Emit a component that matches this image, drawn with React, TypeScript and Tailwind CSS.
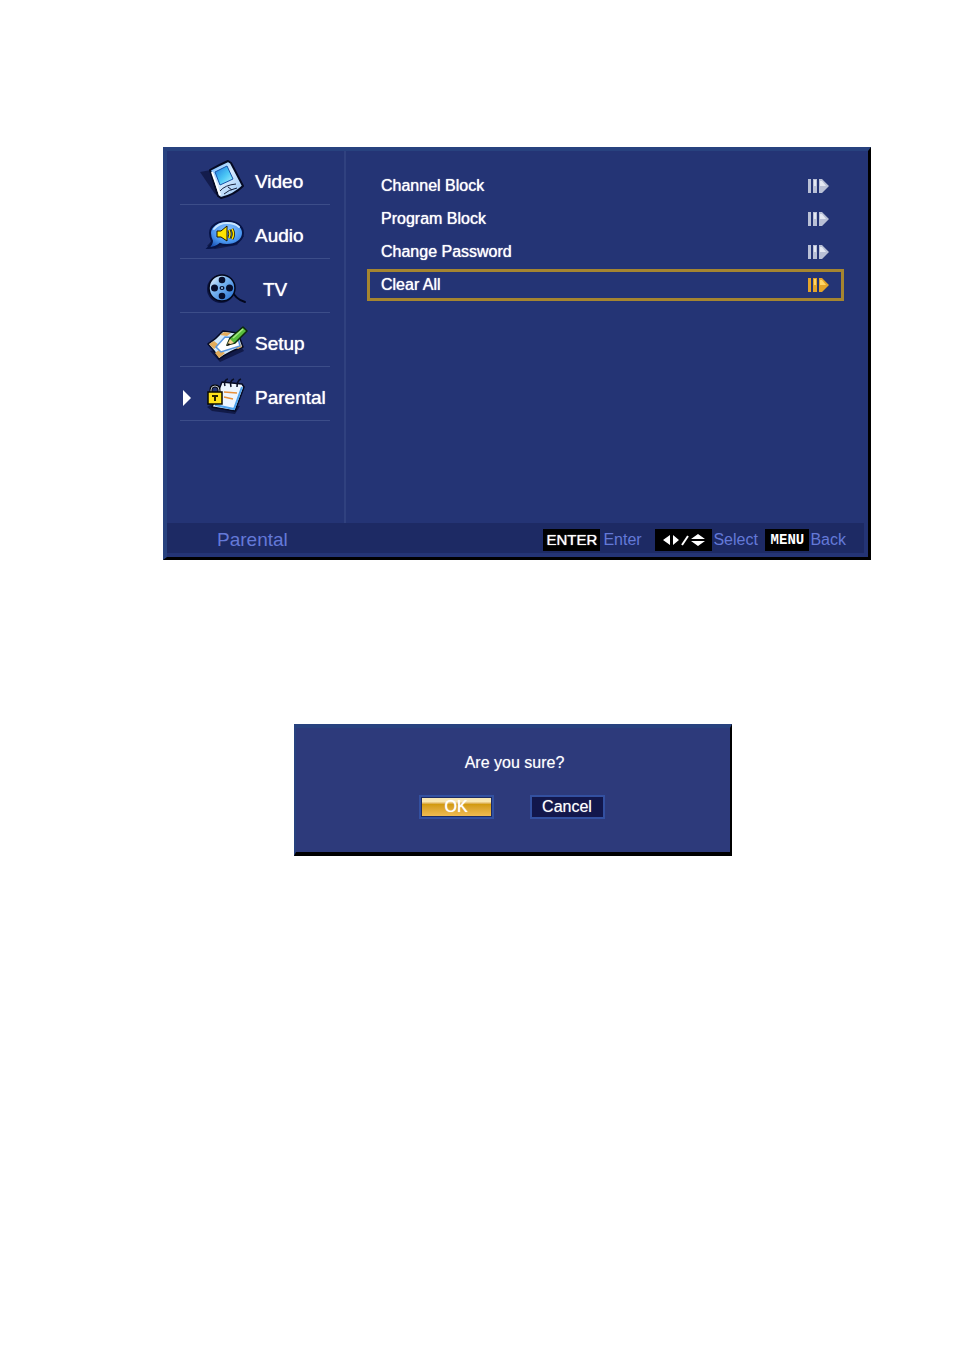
import type { ReactNode } from "react";
import clsx from "clsx";

const VideoIcon = () => (
  <svg viewBox="0 -4 60 54" className="h-[54px] w-[60px] shrink-0" aria-hidden="true">
    <defs>
      <linearGradient id="pda" x1="0" y1="0" x2="1" y2="1">
        <stop offset="0" stopColor="#5fb0ff" />
        <stop offset="0.45" stopColor="#d8ecff" />
        <stop offset="1" stopColor="#8fc0f5" />
      </linearGradient>
      <linearGradient id="pdaScreen" x1="0" y1="0" x2="1" y2="1">
        <stop offset="0" stopColor="#1f78e0" />
        <stop offset="0.55" stopColor="#4cc8f5" />
        <stop offset="1" stopColor="#b6f4ff" />
      </linearGradient>
    </defs>
    <path d="M5 17l11-2 10 27-6-3z" fill="#131c4c" />
    <path d="M15 15q9-5 18-9l3 2 12 23q-9 9-22 12l-3-2z" fill="url(#pda)" stroke="#050a24" strokeWidth="2" strokeLinejoin="round" />
    <path d="M17 17l8 23" stroke="#fff" strokeWidth="2" />
    <path d="M20 17l12-6 6 13-13 6z" fill="url(#pdaScreen)" stroke="#1452a8" strokeWidth="1" />
    <path d="M25 36q5-6 16-7M29 39q4-4 13-6M33 32l4 3" fill="none" stroke="#16203c" strokeWidth="1" />
  </svg>
);

const AudioIcon = () => (
  <svg viewBox="0 -5 60 54" className="h-[54px] w-[60px] shrink-0" aria-hidden="true">
    <defs>
      <radialGradient id="bubble" cx="0.55" cy="0.35" r="0.7">
        <stop offset="0" stopColor="#8fc8ff" />
        <stop offset="0.6" stopColor="#4a96f0" />
        <stop offset="1" stopColor="#1c55b8" />
      </radialGradient>
    </defs>
    <path d="M12 36l8 3 22-4 7-9-30 2z" fill="#131c4c" />
    <path
      d="M32 11c9 0 16 5 16 12s-7 12-16 12c-3 0-5 0-7-1-3 3-7 4-12 4 2-2 4-4 4-7-1-2-2-5-2-8 0-7 8-12 17-12z"
      fill="url(#bubble)"
      stroke="#071447"
      strokeWidth="2"
    />
    <path d="M19 19c3-4 8-6 13-6s9 1 12 4" fill="none" stroke="#c9e6ff" strokeWidth="2" strokeLinecap="round" />
    <path d="M22 21h4l6-5v15l-6-4h-4z" fill="#ffe400" stroke="#1a1600" strokeWidth="1" />
    <path d="M34 20q2 4 0 8M37 19q3 5 0 10" fill="none" stroke="#1a1600" strokeWidth="3" />
    <path d="M34 20q2 4 0 8M37 19q3 5 0 10" fill="none" stroke="#ffe400" strokeWidth="1.5" />
  </svg>
);

const TvIcon = () => (
  <svg viewBox="0 -6 60 54" className="h-[54px] w-[60px] shrink-0" aria-hidden="true">
    <defs>
      <linearGradient id="reel" x1="0" y1="0" x2="1" y2="1">
        <stop offset="0" stopColor="#ffffff" />
        <stop offset="0.4" stopColor="#7db8f2" />
        <stop offset="1" stopColor="#1d6ad0" />
      </linearGradient>
    </defs>
    <path d="M37 25c2 6 6 10 13 12" fill="none" stroke="#03071c" strokeWidth="2" strokeLinecap="round" />
    <circle cx="26" cy="24" r="14" fill="#0c1440" />
    <circle cx="27" cy="23" r="13" fill="url(#reel)" stroke="#03071c" strokeWidth="1.5" />
    <g fill="#060d2c">
      <circle cx="27" cy="15" r="3.3" />
      <circle cx="19.5" cy="23" r="3.5" />
      <circle cx="34.5" cy="23" r="3.5" />
      <circle cx="27" cy="31" r="3.3" />
      <ellipse cx="27" cy="23" rx="2.5" ry="2" />
    </g>
    <circle cx="27" cy="23" r="1" fill="#9ecbf8" />
  </svg>
);

const SetupIcon = () => (
  <svg viewBox="0 -7 60 54" className="h-[54px] w-[60px] shrink-0" aria-hidden="true">
    <path d="M15 31l10 11 24-11-3-5z" fill="#111a48" />
    <path d="M13 24q8-5 15-13l15 2 5 14q-13 4-24 12-4-8-11-15z" fill="#d3eafc" stroke="#050a24" strokeWidth="1.5" strokeLinejoin="round" />
    <path d="M14 24l5-3 5 4-5 4zM25 15l4-3 7 1-4 3zM20 33l4-3 6 3-6 5zM39 27l6-4 2 4-4 2z" fill="#e3ac5c" />
    <path d="M21 27l9-10 13 1 2 8-19 6z" fill="#fff" stroke="#5795dd" strokeWidth="1.5" />
    <path d="M32 25l3-7L48 7l4 4-12 12z" fill="#58bd3d" stroke="#0b2a0b" strokeWidth="1.5" strokeLinejoin="round" />
    <path d="M38 18l10-9" stroke="#a5e884" strokeWidth="1.5" />
    <path d="M32 25l3-6 4 4z" fill="#f5cf93" />
    <path d="M31 26l3-3 1 2z" fill="#0a0a0a" />
  </svg>
);

const ParentalIcon = () => (
  <svg viewBox="0 -7 60 54" className="h-[54px] w-[60px] shrink-0" aria-hidden="true">
    <path d="M12 33l5 4 23 3 5-8-26-3z" fill="#111a48" />
    <path d="M27 8l20 2 2 3-9 24-23-4z" fill="#edf6ff" stroke="#050a24" strokeWidth="1.5" strokeLinejoin="round" />
    <path d="M47 13l-8 22-19-4" fill="none" stroke="#4da3ee" strokeWidth="2" />
    <path d="M29 18l13 1M29 23l9 2" stroke="#e8913a" strokeWidth="1.5" />
    <path d="M30 12c-1-3 0-7 3-7M36 13c-1-4 0-7 3-8M42 13c0-4 1-7 4-8" fill="none" stroke="#0a0f24" strokeWidth="1.5" />
    <path d="M16 20v-4q0-4 4-4t4 4v4" fill="none" stroke="#0a0a0a" strokeWidth="3" />
    <path d="M16 20v-4q0-4 4-4t4 4v4" fill="none" stroke="#b9bfcc" strokeWidth="1" />
    <rect x="13" y="18" width="14" height="12" fill="#ffe21a" stroke="#0a0a00" strokeWidth="1.5" />
    <path d="M17 22h6M20 22v5" stroke="#2a2400" strokeWidth="2" />
  </svg>
);

const ArrowMark = ({ active }: { active?: boolean }) => (
  <svg
    viewBox="0 0 22 14"
    className={clsx("h-[14px] w-[22px] shrink-0", active ? "text-[#e3a42a]" : "text-[#b9c0d6]")}
    fill="currentColor"
    aria-hidden="true"
  >
    <path d="M1 0h3v14H1zM6 0h4v14H6zM12 0h3l7 7-7 7h-3z" />
    <path d="M7 1h2v6H7zM13 2h2l4 5h-6z" fill={active ? "#ffd566" : "#e4e8f2"} />
  </svg>
);

const navItems: { label: string; icon: ReactNode; active?: boolean }[] = [
  { label: "Video", icon: <VideoIcon /> },
  { label: "Audio", icon: <AudioIcon /> },
  { label: "TV", icon: <TvIcon /> },
  { label: "Setup", icon: <SetupIcon /> },
  { label: "Parental", icon: <ParentalIcon />, active: true },
];

const options = ["Channel Block", "Program Block", "Change Password", "Clear All"];
const selected = "Clear All";

export default function App() {
  return (
    <main className="min-h-screen bg-white pt-[147px] pr-[83px] pb-16 pl-[163px] font-['Liberation_Sans',Arial,sans-serif] text-white">
      {/* Settings menu */}
      <section className="border-t-4 border-r-3 border-b-3 border-l-4 border-t-[#28427f] border-r-black border-b-black border-l-[#28427f] bg-[#243475]">
        <div className="flex">
          <nav className="w-[179px] shrink-0 border-r-2 border-[#30417f] pr-[14px] pb-[102px] pl-[13px]">
            {navItems.map((item) => (
              <button
                key={item.label}
                type="button"
                className="flex h-[54px] w-full items-center border-b border-[#3c4d89] text-left"
              >
                <span className="flex w-[15px] shrink-0 pt-2 pl-[3px]">
                  {item.active && (
                    <svg viewBox="0 0 8 16" className="h-4 w-2" aria-hidden="true">
                      <path d="M0 0l8 8-8 8z" fill="#fff" />
                    </svg>
                  )}
                </span>
                {item.icon}
                <span className={clsx("pt-2 text-[19px] leading-6 [text-shadow:0_0_1px_#fff]", item.label === "TV" && "pl-2")}>
                  {item.label}
                </span>
              </button>
            ))}
          </nav>

          <div className="flex grow flex-col gap-px pt-[19px] pr-[24px] pl-[21px]">
            {options.map((option) => (
              <button
                key={option}
                type="button"
                className={clsx(
                  "flex h-8 items-center justify-between border-3 pr-[12px] pl-[11px] text-base [text-shadow:0_0_1px_#fff]",
                  option === selected ? "border-[#a58530]" : "border-transparent"
                )}
              >
                {option}
                <ArrowMark active={option === selected} />
              </button>
            ))}
          </div>
        </div>

        {/* Key hints */}
        <footer className="mr-1 mb-1 flex h-[30px] items-center bg-[#1d2a64] pt-1 pr-[18px] pl-[50px] text-base text-[#6479d8]">
          <span className="grow text-[19px]">Parental</span>
          <div className="flex items-center">
            <kbd className="flex h-[22px] w-[57px] items-center justify-center bg-black font-['Liberation_Sans',Arial,sans-serif] text-[15px] text-white [text-shadow:0_0_1px_#fff]">
              ENTER
            </kbd>
            <span className="w-[55px] pl-[3px]">Enter</span>
            <kbd className="flex h-[22px] w-[57px] items-center justify-center bg-black">
              <svg viewBox="0 0 42 14" className="h-[14px] w-[42px]" fill="#fff" role="img" aria-label="Arrow keys">
                <path d="M7 2v10L0 7zM10 2v10l6-5zM42 6H28l7-5zM42 8H28l7 5z" />
                <path d="M19 12l6-9" stroke="#fff" strokeWidth="2" />
              </svg>
            </kbd>
            <span className="w-[53px] pl-px">Select</span>
            <kbd className="flex h-[22px] w-[44px] items-center justify-center bg-black font-['Liberation_Mono',monospace] text-sm font-bold text-white">
              MENU
            </kbd>
            <span className="pl-px">Back</span>
          </div>
        </footer>
      </section>

      {/* Confirm dialog */}
      <section
        role="dialog"
        aria-labelledby="confirm-title"
        className="mt-[164px] ml-[131px] w-[438px] max-w-full border-t-4 border-r-2 border-b-4 border-l-2 border-t-[#28427f] border-r-black border-b-black border-l-[#28427f] bg-[#2d3a7b] pt-[23px] pb-[33px] pl-[3px]"
      >
        <p id="confirm-title" className="text-center text-base leading-6 [text-shadow:0_0_1px_#ffffff80]">
          Are you sure?
        </p>
        <div className="mt-5 flex justify-center gap-9 pr-[6px]">
          <button
            type="button"
            className="flex h-6 w-[75px] items-center justify-center border-2 border-[#3350a0] bg-[#1c2a63] p-px text-base"
          >
            <span className="flex h-full w-full items-center justify-center bg-linear-to-b from-[#f8e6b0] from-20% via-[#d29a0c] via-35% to-[#f0bb50] [text-shadow:0_0_1px_#fff]">
              OK
            </span>
          </button>
          <button
            type="button"
            className="flex h-6 w-[75px] items-center justify-center border-2 border-[#3350a0] bg-[#12174c] text-base [text-shadow:0_0_1px_#ffffff80]"
          >
            Cancel
          </button>
        </div>
      </section>
    </main>
  );
}
